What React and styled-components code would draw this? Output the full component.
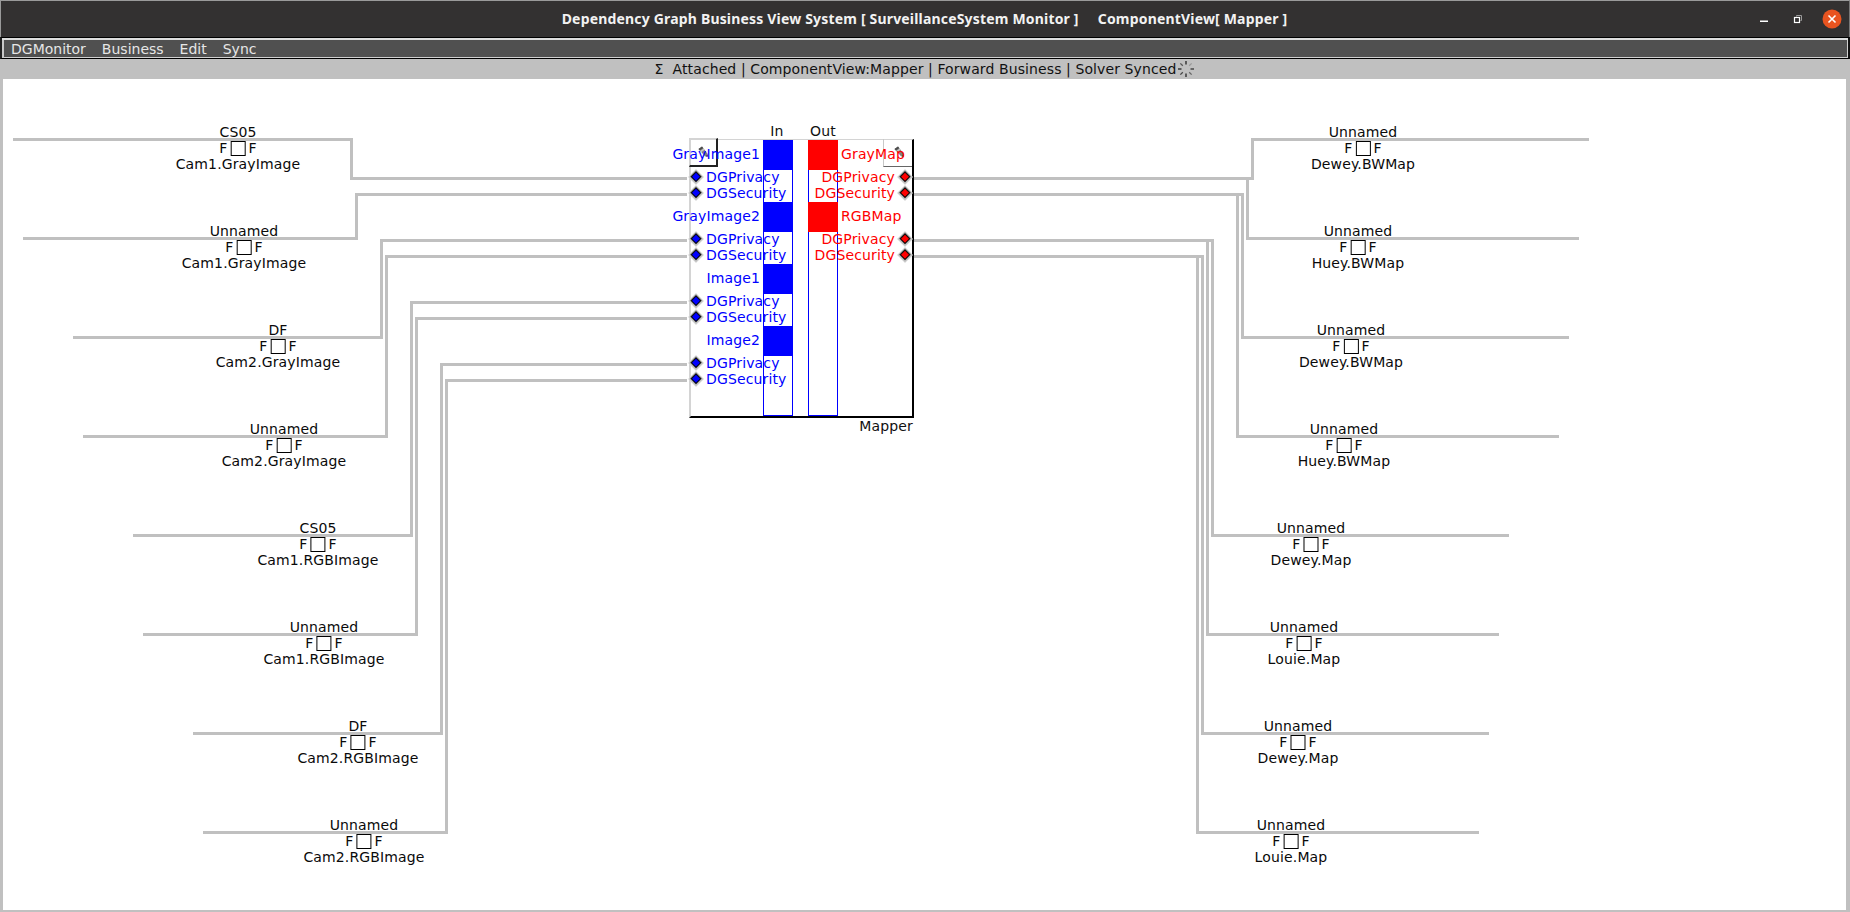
import React from 'react';
import styled, { createGlobalStyle } from 'styled-components';

const CANVAS_X = 3;
const CANVAS_Y = 79;
const ROW_Y = (i) => 139.5 + 99 * i;

const Global = createGlobalStyle`
  html, body { margin: 0; padding: 0; height: 100%; overflow: hidden; background: #c0c0c0; }
  #root { height: 100%; }
  * { box-sizing: border-box; }
`;

const Window = styled.div`
  width: 1850px;
  height: 912px;
  display: flex;
  flex-direction: column;
  background: #c0c0c0;
  font-family: "DejaVu Sans", sans-serif;
  font-size: 14px;
  letter-spacing: 0.14px;
  color: #000;
`;

const TitleBar = styled.header`
  position: relative;
  height: 37px;
  flex: none;
  display: flex;
  align-items: center;
  justify-content: center;
  background: #333131;
  border-top: 1px solid #9a9a9a;
  border-left: 1px solid #9a9a9a;
  border-right: 1px solid #777;
`;

const Title = styled.div`
  font-family: "Noto Sans", sans-serif;
  font-weight: 700;
  font-size: 14px;
  letter-spacing: 0.18px;
  color: #f2f2f2;
  white-space: pre;
  margin-top: -1px;
  margin-left: -1px;
`;

const WindowControls = styled.svg`
  position: absolute;
  left: 1749px;
  top: -1px;
`;

const MenuBar = styled.nav`
  height: 22px;
  flex: none;
  display: flex;
  align-items: center;
  background: #505050;
  padding-left: 1px;
  letter-spacing: 0;
  border-top: 1px solid #000;
  border-bottom: 1px solid #000;
  border-left: 2px solid #222;
  border-right: 2px solid #111;
  box-shadow: inset 0 2px 0 #dcdcdc, inset 2px 0 0 #c8c8c8, inset 0 -1px 0 #cfcfcf, inset -1px 0 0 #cfcfcf;
`;

const MenuItem = styled.span`
  padding: 1px 8px 0;
  color: #e6e6e6;
  line-height: 16px;
`;

const StatusBar = styled.div`
  height: 20px;
  flex: none;
  display: flex;
  align-items: center;
  justify-content: center;
  background: #c0c0c0;
  white-space: pre;
  letter-spacing: 0.1px;
  color: #111;
`;

const Spinner = styled.svg`
  margin-left: 1px;
`;

const Canvas = styled.main`
  position: relative;
  flex: 1;
  margin: 0 4px 2px 3px;
  background: #fff;
  overflow: hidden;
`;

const WireLayer = styled.svg`
  position: absolute;
  inset: 0;
`;

const Wire = styled.polyline`
  fill: none;
  stroke: #c0c0c0;
  stroke-width: 3;
`;

const EndpointLabel = styled.div`
  position: absolute;
  left: ${(p) => p.$x - CANVAS_X}px;
  top: ${(p) => p.$y - CANVAS_Y}px;
  transform: translateX(-50%);
  display: flex;
  flex-direction: column;
  align-items: center;
  line-height: 16px;
  white-space: nowrap;
  color: #0a0a0a;
`;

const FlagRow = styled.div`
  display: flex;
  align-items: center;
  gap: 3px;
  height: 16px;
`;

const FlagBox = styled.span`
  width: 15px;
  height: 15px;
  border: 1px solid #000;
  background: #fff;
`;

const Node = styled.section`
  position: absolute;
  left: ${689 - CANVAS_X}px;
  top: ${139 - CANVAS_Y}px;
  width: 225px;
  height: 279px;
  border-top: 1px solid #d4d4d4;
  border-left: 2px solid #d4d4d4;
  border-right: 2px solid #000;
  border-bottom: 2px solid #000;
`;

const ColumnTitle = styled.span`
  position: absolute;
  left: ${(p) => p.$x - 691}px;
  top: -17px;
  transform: translateX(-50%);
  line-height: 16px;
  color: #111;
`;

const NodeName = styled.span`
  position: absolute;
  right: -1px;
  top: 279px;
  line-height: 16px;
  margin-top: -1px;
  color: #111;
`;

const Bar = styled.div`
  position: absolute;
  left: ${(p) => p.$x - 691}px;
  top: 0;
  bottom: 0;
  width: 30px;
  border: 1px solid #0000ff;
  border-top: none;
`;

const Block = styled.div`
  height: 30px;
  margin: 0 -1px 32px;
  background: ${(p) => p.$color};
`;

const CornerTab = styled.div`
  position: absolute;
  top: -1px;
  width: 29px;
  height: 28px;
  ${(p) =>
    p.$side === 'left'
      ? 'left: -2px; border-top: 1px solid #d4d4d4; border-left: 1px solid #d4d4d4; border-right: 2px solid #222; border-bottom: 2px solid #222; margin-top: -1px; height: 29px;'
      : 'right: 0; border-left: 1px solid #c8c8c8; border-bottom: 1px solid #666;'}
`;

const Pencil = styled.svg`
  position: absolute;
  top: 7px;
  ${(p) => (p.$side === 'left' ? 'left: 8px;' : 'left: 10px;')}
`;

const PortColumn = styled.div`
  position: absolute;
  top: 0;
  width: 70px;
  display: flex;
  flex-direction: column;
  ${(p) => (p.$side === 'in' ? 'left: -1px;' : 'right: 0; width: 71px;')}
`;

const PortGroup = styled.div`
  display: flex;
  flex-direction: column;
  height: 62px;
`;

const PortTitle = styled.div`
  height: 30px;
  display: flex;
  align-items: center;
  white-space: nowrap;
  margin-top: -1px;
  margin-bottom: 1px;
  justify-content: ${(p) => (p.$side === 'in' ? 'flex-end' : 'flex-start')};
  color: ${(p) => (p.$side === 'in' ? '#0000ff' : '#ff0000')};
`;

const PortRow = styled.div`
  height: 16px;
  display: flex;
  align-items: center;
  white-space: nowrap;
  margin-top: -1px;
  margin-bottom: 1px;
  gap: 2px;
  flex-direction: ${(p) => (p.$side === 'in' ? 'row' : 'row-reverse')};
  justify-content: flex-start;
  color: ${(p) => (p.$side === 'in' ? '#0000ff' : '#ff0000')};
`;

const Diamond = styled.svg`
  flex: none;
  ${(p) => (p.$side === 'in' ? 'margin-left: -2px;' : 'margin-right: -1px;')}
`;

const wiresLeft = [
  [13, 351.5, 178.5], [23, 356.5, 194.5],
  [73, 381.5, 240.5], [83, 386.5, 256.5],
  [133, 411.5, 302.5], [143, 416.5, 318.5],
  [193, 441.5, 364.5], [203, 446.5, 380.5],
];

const wiresRight = [
  [1589, 1252.5, 178.5], [1579, 1247.5, 178.5],
  [1569, 1242.5, 194.5], [1559, 1237.5, 194.5],
  [1509, 1212.5, 240.5], [1499, 1207.5, 240.5],
  [1489, 1202.5, 256.5], [1479, 1197.5, 256.5],
];

const labelsLeft = [
  ['CS05', 'Cam1.GrayImage', 238], ['Unnamed', 'Cam1.GrayImage', 244],
  ['DF', 'Cam2.GrayImage', 278], ['Unnamed', 'Cam2.GrayImage', 284],
  ['CS05', 'Cam1.RGBImage', 318], ['Unnamed', 'Cam1.RGBImage', 324],
  ['DF', 'Cam2.RGBImage', 358], ['Unnamed', 'Cam2.RGBImage', 364],
];

const labelsRight = [
  ['Unnamed', 'Dewey.BWMap', 1363], ['Unnamed', 'Huey.BWMap', 1358],
  ['Unnamed', 'Dewey.BWMap', 1351], ['Unnamed', 'Huey.BWMap', 1344],
  ['Unnamed', 'Dewey.Map', 1311], ['Unnamed', 'Louie.Map', 1304],
  ['Unnamed', 'Dewey.Map', 1298], ['Unnamed', 'Louie.Map', 1291],
];

const DiamondIcon = ({ side }) => (
  <Diamond $side={side} width="16" height="16" viewBox="0 0 16 16">
    <polygon points="8,0 16,8 8,16 0,8" fill="#dcdcdc" />
    <polygon points="8,0.8 15.2,8 8,15.2 0.8,8" fill="#c4c4c4" />
    <polygon points="8,1.4 14,7.4 8,13.4 2,7.4" fill="#6e6e6e" />
    <polygon points="8,2.6 13.2,7.8 8,13 2.8,7.8" fill="#000" />
    <polygon points="8,3.8 12,7.8 8,11.8 4,7.8" fill={side === 'in' ? '#0000ff' : '#ff0000'} />
  </Diamond>
);

const PencilIcon = ({ side }) => (
  <Pencil $side={side} width="10" height="11" viewBox="0 0 10 11">
    <path d="M0.5 3 L4 0.5 L9.8 8 L9.8 10.8 L7 10.2 Z" fill="#808080" />
    <path d="M0.5 3 L4 0.5 L5.2 2 L1.8 4.6 Z" fill="#4c4c4c" />
    <path d="M2.2 5 L5.6 2.5 L6.6 3.8 L3.2 6.3 Z" fill="#c8c8c8" />
    <path d="M7.6 10.2 L9.8 8.6 L9.8 10.8 Z" fill="#333" />
  </Pencil>
);

const Ports = ({ side, groups }) => (
  <PortColumn $side={side}>
    {groups.map((name) => (
      <PortGroup key={name}>
        <PortTitle $side={side}>{name}</PortTitle>
        {['DGPrivacy', 'DGSecurity'].map((p) => (
          <PortRow key={p} $side={side}>
            <DiamondIcon side={side} />
            <span>{p}</span>
          </PortRow>
        ))}
      </PortGroup>
    ))}
  </PortColumn>
);

const Endpoint = ({ top, bottom, x, y }) => (
  <EndpointLabel $x={x} $y={y}>
    <span>{top}</span>
    <FlagRow>
      <span>F</span>
      <FlagBox />
      <span>F</span>
    </FlagRow>
    <span>{bottom}</span>
  </EndpointLabel>
);

const spinnerDashes = [
  [0, '#222'], [45, '#999'], [90, '#333'], [135, '#666'],
  [180, '#222'], [225, '#444'], [270, '#222'], [315, '#555'],
];

export default function App() {
  const menu = ['DGMonitor', 'Business', 'Edit', 'Sync'];
  return (
    <Window>
      <Global />
      <TitleBar>
        <Title>{'Dependency Graph Business View System [ SurveillanceSystem Monitor ]     ComponentView[ Mapper ]'}</Title>
        <WindowControls width="95" height="37" viewBox="0 0 95 37">
          <rect x="10" y="20.5" width="8" height="1.5" fill="#fff" />
          <path d="M46.5 16.5 V15.5 H51.5 V20.5 H50.5" fill="none" stroke="#9a9a9a" />
          <rect x="44.5" y="17.5" width="5" height="5" fill="none" stroke="#fff" strokeWidth="1.2" />
          <circle cx="82" cy="19" r="9.5" fill="#e95420" />
          <path d="M78.5 15.5 L85.5 22.5 M85.5 15.5 L78.5 22.5" stroke="#fff" strokeWidth="1.6" />
        </WindowControls>
      </TitleBar>
      <MenuBar>
        {menu.map((m) => (
          <MenuItem key={m}>{m}</MenuItem>
        ))}
      </MenuBar>
      <StatusBar>
        <span>{'Σ  Attached | ComponentView:Mapper | Forward Business | Solver Synced'}</span>
        <Spinner width="18" height="18" viewBox="-9 -9 18 18">
          {spinnerDashes.map(([a, c]) => (
            <line key={a} x1="0" y1="-8" x2="0" y2="-4.5" stroke={c} strokeWidth="1.3" transform={`rotate(${a})`} />
          ))}
        </Spinner>
      </StatusBar>
      <Canvas>
        <WireLayer width="1843" height="831" viewBox={`${CANVAS_X} ${CANVAS_Y} 1843 831`}>
          {wiresLeft.map(([x0, xv, yp], i) => (
            <Wire key={i} points={`${x0},${ROW_Y(i)} ${xv},${ROW_Y(i)} ${xv},${yp} 687,${yp}`} />
          ))}
          {wiresRight.map(([x0, xv, yp], i) => (
            <Wire key={i} points={`${x0},${ROW_Y(i)} ${xv},${ROW_Y(i)} ${xv},${yp} 913,${yp}`} />
          ))}
        </WireLayer>
        {labelsLeft.map(([top, bottom, x], i) => (
          <Endpoint key={i} top={top} bottom={bottom} x={x} y={124 + 99 * i} />
        ))}
        {labelsRight.map(([top, bottom, x], i) => (
          <Endpoint key={i} top={top} bottom={bottom} x={x} y={124 + 99 * i} />
        ))}
        <Node>
          <ColumnTitle $x={777}>In</ColumnTitle>
          <ColumnTitle $x={823}>Out</ColumnTitle>
          <Bar $x={763}>
            {[0, 1, 2, 3].map((i) => (
              <Block key={i} $color="#0000ff" />
            ))}
          </Bar>
          <Bar $x={808}>
            {[0, 1].map((i) => (
              <Block key={i} $color="#ff0000" />
            ))}
          </Bar>
          <CornerTab $side="left">
            <PencilIcon side="left" />
          </CornerTab>
          <CornerTab $side="right">
            <PencilIcon side="right" />
          </CornerTab>
          <Ports side="in" groups={['GrayImage1', 'GrayImage2', 'Image1', 'Image2']} />
          <Ports side="out" groups={['GrayMap', 'RGBMap']} />
          <NodeName>Mapper</NodeName>
        </Node>
      </Canvas>
    </Window>
  );
}
